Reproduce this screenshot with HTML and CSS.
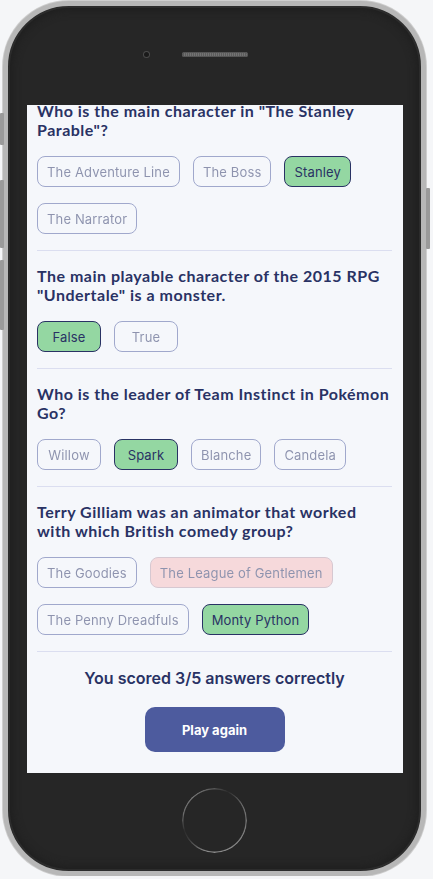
FILE: index.html
```html
<!DOCTYPE html>
<html lang="en">
<head>
<meta charset="utf-8">
<title>Quizzical</title>
<link rel="stylesheet" href="styles.css">
</head>
<body>
<div class="phone">
  <span class="side-btn left b1"></span>
  <span class="side-btn left b2"></span>
  <span class="side-btn left b3"></span>
  <span class="side-btn right b4"></span>
  <div class="top-bezel">
    <span class="camera"></span>
    <span class="speaker"></span>
    <span></span>
  </div>
  <div class="screen">
    <div class="quiz">
      <section class="question">
        <h2 class="q-text">Who is the main character in "The Stanley Parable"?</h2>
        <div class="answers">
          <span class="answer">The Adventure Line</span>
          <span class="answer">The Boss</span>
          <span class="answer correct">Stanley</span>
          <span class="answer">The Narrator</span>
        </div>
      </section>
      <section class="question">
        <h2 class="q-text">The main playable character of the 2015 RPG "Undertale" is a monster.</h2>
        <div class="answers">
          <span class="answer correct">False</span>
          <span class="answer">True</span>
        </div>
      </section>
      <section class="question">
        <h2 class="q-text">Who is the leader of Team Instinct in Pokémon Go?</h2>
        <div class="answers">
          <span class="answer">Willow</span>
          <span class="answer correct">Spark</span>
          <span class="answer">Blanche</span>
          <span class="answer">Candela</span>
        </div>
      </section>
      <section class="question">
        <h2 class="q-text">Terry Gilliam was an animator that worked with which British comedy group?</h2>
        <div class="answers">
          <span class="answer">The Goodies</span>
          <span class="answer wrong">The League of Gentlemen</span>
          <span class="answer">The Penny Dreadfuls</span>
          <span class="answer correct">Monty Python</span>
        </div>
      </section>
      <div class="result">
        <p class="score">You scored 3/5 answers correctly</p>
        <button class="play">Play again</button>
      </div>
    </div>
  </div>
  <div class="bottom-bezel">
    <span class="home"></span>
  </div>
</div>
</body>
</html>
```

FILE: styles.css
```css
html, body {
  margin: 0;
  padding: 0;
  background: #f5f6f8;
}

.phone {
  position: relative;
  box-sizing: border-box;
  width: 423px;
  height: 875px;
  margin: 1px 0 0 3px;
  border: 5px solid #b7b7b7;
  border-radius: 66px;
  background: #262626;
  display: flex;
  flex-direction: column;
  box-shadow: 0 0 0 1px #cfcfcf, inset 0 0 0 2px #2c2c2c, inset 0 0 10px 3px #1d1d1d;
}

.side-btn {
  position: absolute;
  width: 4px;
  background: #9a9a9a;
  border-radius: 1px;
}
.side-btn.left { left: -8px; }
.side-btn.right { right: -9px; }
.b1 { top: 107px; height: 32px; }
.b2 { top: 174px; height: 68px; }
.b3 { top: 254px; height: 70px; }
.b4 { top: 182px; height: 61px; }

.top-bezel {
  box-sizing: border-box;
  height: 99px;
  padding-top: 46px;
  display: grid;
  grid-template-columns: 1fr auto 1fr;
  align-items: start;
}
.camera {
  justify-self: end;
  margin-right: 33px;
  width: 5px;
  height: 5px;
  border-radius: 50%;
  background: #1a1a1a;
  box-shadow: 0 0 0 1px #4a4a4a;
}
.speaker {
  width: 66px;
  height: 5px;
  border-radius: 3px;
  background: repeating-linear-gradient(90deg, #727272 0 1px, #5c5c5c 1px 2px);
  box-shadow: inset 0 0 0 1px #555;
}

.screen {
  width: 376px;
  height: 668px;
  margin-left: 19px;
  background: #F5F7FB;
  overflow: hidden;
}
.quiz {
  margin-top: -19px;
  padding: 0 11px 0 10px;
}
.question {
  padding: 15px 0 16px;
  border-bottom: 1px solid #DBDEF0;
}
.q-text {
  margin: 0;
  font-family: Lato, "Liberation Sans", sans-serif;
  font-weight: 700;
  font-size: 16px;
  line-height: 19px;
  letter-spacing: 0.5px;
  color: #293264;
}
.answers {
  display: flex;
  flex-wrap: wrap;
  gap: 16px 13px;
  margin-top: 17px;
}
.answer {
  box-sizing: border-box;
  height: 31px;
  min-width: 64px;
  padding: 0 9px;
  border: 1px solid #4D5B9E;
  border-radius: 8px;
  font-family: Inter, "Liberation Sans", sans-serif;
  font-size: 13px;
  letter-spacing: 0.15px;
  color: #293264;
  display: flex;
  align-items: center;
  justify-content: center;
  opacity: 0.5;
}
.answer.correct {
  background: #94D7A2;
  border-color: #293264;
  opacity: 1;
}
.answer.wrong {
  background: #F8BCBC;
  border-color: #b99aa8;
}

.result {
  padding: 16px 0 22px;
  display: flex;
  flex-direction: column;
  align-items: center;
}
.score {
  margin: 0;
  font-family: Inter, "Liberation Sans", sans-serif;
  font-weight: 600;
  font-size: 16px;
  line-height: 20px;
  color: #293264;
}
.play {
  margin-top: 19px;
  width: 140px;
  height: 45px;
  border: none;
  border-radius: 10px;
  background: #4D5B9E;
  color: #ffffff;
  font-family: Inter, "Liberation Sans", sans-serif;
  font-weight: 700;
  font-size: 13px;
}

.bottom-bezel {
  flex: 1;
  display: flex;
  align-items: center;
  justify-content: center;
  padding-bottom: 3px;
}
.home {
  width: 65px;
  height: 65px;
  border-radius: 50%;
  background: conic-gradient(from 0deg, #555 0deg, #2c2c2c 25deg, #6a6a6a 60deg, #7c7c7c 110deg, #888 160deg, #8a8a8a 195deg, #3a3a3a 235deg, #2c2c2c 250deg, #6a6a6a 280deg, #777 320deg, #555 360deg);
  -webkit-mask: radial-gradient(circle, transparent 30.5px, #000 31.5px);
  mask: radial-gradient(circle, transparent 30.5px, #000 31.5px);
}
```
